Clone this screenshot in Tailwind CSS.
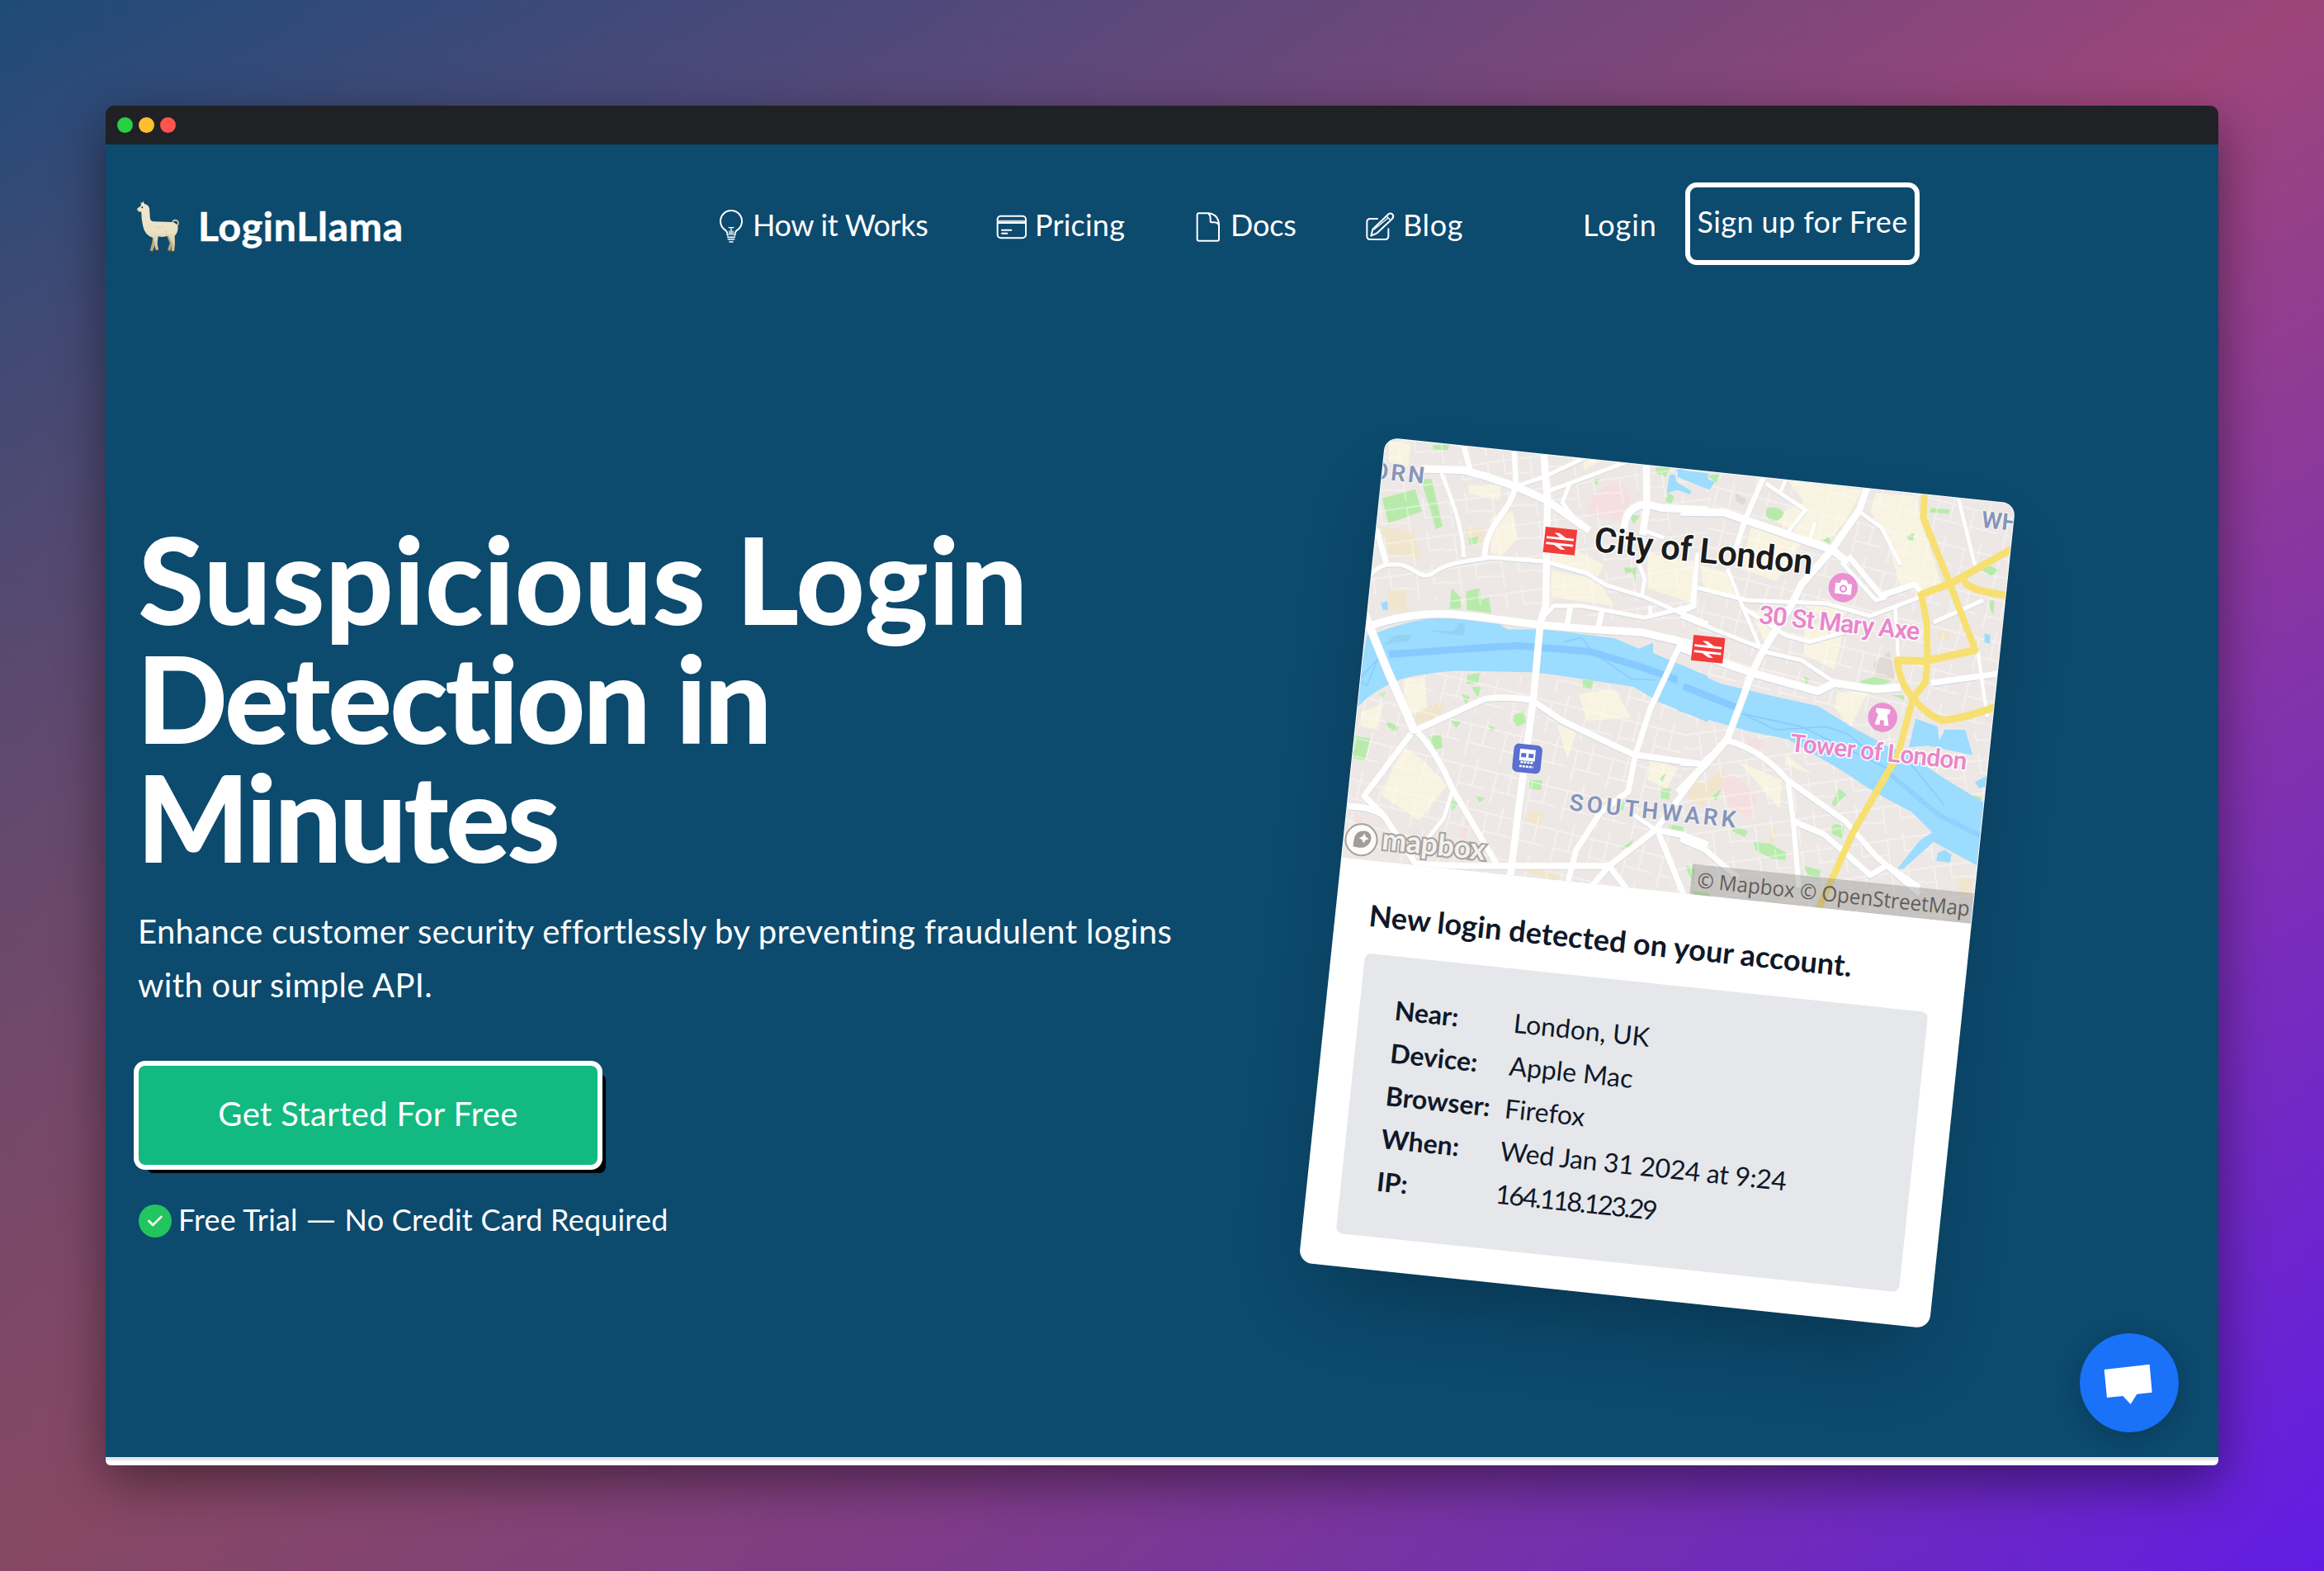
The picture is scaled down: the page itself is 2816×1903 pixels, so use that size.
<!DOCTYPE html>
<html lang="en">
<head>
<meta charset="utf-8">
<title>LoginLlama</title>
<script src="https://cdn.jsdelivr.net/npm/@tailwindcss/browser@4"></script>
</head>
<body class="h-[1903px] w-[2816px] overflow-hidden bg-[radial-gradient(ellipse_at_bottom_left,rgba(110,75,75,0.5),rgba(110,75,75,0)_75%),linear-gradient(to_bottom_right,#1c4b7a_0%,#9d457b_50%,#601be9_100%)] p-32 font-[Lato,sans-serif] text-white">
<div class="relative flex h-[1647px] w-[2560px] flex-col overflow-visible rounded-[10px] shadow-[0_20px_60px_rgba(0,0,0,0.45)]">

  <div class="flex h-[47px] shrink-0 items-center gap-[7px] rounded-t-[10px] bg-[#202124] pl-3.5">
    <span class="size-[19px] rounded-full bg-[#28d044]"></span>
    <span class="size-[19px] rounded-full bg-[#ffbf2f]"></span>
    <span class="size-[19px] rounded-full bg-[#ff544d]"></span>
  </div>

  <div class="h-[1590px] shrink-0 bg-[#0c4a6e]">
    <header class="flex h-[192px] items-center pl-[27px] text-4xl leading-[48px]">
      <a class="flex w-[709px] items-center gap-[5px]">
        <svg class="mt-2 size-20" viewBox="0 0 240 240">
          <defs><linearGradient id="wool" x1="0" y1="0" x2="0" y2="1"><stop offset="0" stop-color="#efe9d2"/><stop offset=".6" stop-color="#e9e1c2"/><stop offset="1" stop-color="#cfc294"/></linearGradient></defs>
          <path d="M164 110Q160 96 171 95Q184 96 183 108Q181 116 172 112" fill="none" stroke="#d8cda4" stroke-width="5"/>
          <path d="M92 148l-5 32-8 30 10 0 12-30 6-30zM140 148l12 30-9 31 11 0 8-32-6-30z" fill="#b9a976"/>
          <path d="M32 60Q31 52 46 45L48 36L45 29L53 34L54 25L61 37Q74 38 78 52L80 78Q79 98 92 100L160 102Q182 106 182 124Q181 142 170 152L171 180L168 211H159L160 180L148 150Q130 160 110 154L107 180L112 207H102L96 180L92 160Q62 152 55 118Q48 90 49 64Q38 66 32 60Z" fill="url(#wool)"/>
          <path d="M136 128q-2 22 14 28M100 118q20 10 30-2" fill="none" stroke="#d5caa0" stroke-width="3" opacity=".7"/>
          <circle cx="52" cy="49" r="3" fill="#2a2320"/><path d="M31 58l6-1 1 5-5 1z" fill="#54443a"/>
          <path d="M78 206h11l-1 6H75zM102 203h9l2 5h-12zM142 205h11l-1 5h-12zM159 207h10l-1 7h-11z" fill="#4a3d35"/>
        </svg>
        <span class="pt-1.5 text-5xl font-bold tracking-[0.8px] [-webkit-text-stroke:0.6px_#fff]">LoginLlama</span>
      </a>
      <a class="flex w-[340px] items-center gap-2">
        <svg class="h-[50px] w-10" viewBox="0 3 120 150" fill="none" stroke="#fff" stroke-width="6" stroke-linecap="round" stroke-linejoin="round">
          <path d="M53 120Q53 106 40 98A39 39 0 1 1 92 98Q79 106 79 120"/><path d="M57 92H75M66 92V118M60 105V118M72 105V118" stroke-width="4"/><path d="M53 127H79M55 135H77M60 144H72" stroke-width="5"/>
        </svg>
        <span class="pt-0.5 tracking-[-0.35px]">How it Works</span>
      </a>
      <a class="flex w-[241px] items-center gap-2">
        <svg class="h-[50px] w-[42px]" viewBox="1020 3 126 150" fill="none" stroke="#fff" stroke-width="6" stroke-linecap="round">
          <rect x="1034" y="50" width="103" height="80" rx="12"/><path d="M1035 67H1136" stroke-width="3"/><path d="M1035 74H1136" stroke-width="8" stroke-linecap="butt"/><path d="M1050 101H1084M1050 113H1069"/>
        </svg>
        <span class="pt-0.5 tracking-[0.2px]">Pricing</span>
      </a>
      <a class="flex w-[208px] items-center gap-1.5">
        <svg class="h-[50px] w-10" viewBox="15 3 120 150" fill="none" stroke="#fff" stroke-width="6" stroke-linejoin="round">
          <path d="M38 40H72Q110 44 111 84V134Q111 140 105 140H38Q32 140 32 134V46Q32 40 38 40Z"/><path d="M72 40Q80 46 80 60V68Q80 73 85 73H94Q108 74 111 84"/>
        </svg>
        <span class="pt-0.5 tracking-[-0.2px]">Docs</span>
      </a>
      <a class="flex w-[265px] items-center gap-[7px]">
        <svg class="h-[50px] w-10" viewBox="640 3 120 150" fill="none" stroke="#fff" stroke-width="6" stroke-linecap="round" stroke-linejoin="round">
          <path d="M688 60H662Q650 60 650 72V123Q650 135 662 135H716Q728 135 728 123V97"/><path d="M665 122L671 98L727 44Q735 37 743 44Q749 52 742 60L687 112Z"/><path d="M721 50L736 65M676 99L727 57" stroke-width="4"/>
        </svg>
        <span class="pt-0.5 tracking-[0.7px]">Blog</span>
      </a>
      <a class="w-[124px] pt-0.5 tracking-[1px]">Login</a>
      <a class="flex h-[100px] w-[284px] items-center justify-center rounded-[14px] border-6 border-white pb-1.5 tracking-[0.4px] whitespace-nowrap">Sign up for Free</a>
    </header>

    <section class="flex">
      <div class="w-[1496px] shrink-0 pt-[262px] pl-10">
        <h1 class="text-[144px] leading-[144px] font-bold [-webkit-text-stroke:2px_#fff]">
          <span class="block tracking-[1.4px]">Suspicious Login</span>
          <span class="-ml-0.5 block tracking-[-2px]">Detection in</span>
          <span class="-ml-0.5 block tracking-[-2.5px]">Minutes</span>
        </h1>
        <p class="mt-[35px] -ml-px text-[40px] leading-[65px] tracking-[0.34px]">Enhance customer security effortlessly by preventing fraudulent logins<br>with our simple API.</p>
        <a class="mt-[65px] flex h-[120px] w-[556px] items-center justify-center rounded-lg bg-[#12b981] pb-1 text-[40px] tracking-[0.34px] shadow-[0_0_0_6px_#fff,10px_10px_0_0_#000]">Get Started For Free</a>
        <div class="mt-12 flex h-10 items-center gap-2">
          <svg class="size-10" viewBox="0 0 40 40"><circle cx="20" cy="20" r="20" fill="#22c55e"/><path d="M12.4 20L17.2 25L27.4 14.8" fill="none" stroke="#fff" stroke-width="2.6" stroke-linecap="round" stroke-linejoin="round"/></svg>
          <span class="pb-1 text-4xl leading-[48px] tracking-[0.2px]">Free Trial <span class="inline-block w-[38px] origin-left scale-x-[1.33]">—</span> No Credit Card Required</span>
        </div>
      </div>

      <article class="mt-[200px] h-[1005px] w-[768px] shrink-0 rotate-6 overflow-hidden rounded-2xl bg-white text-gray-900 shadow-[0_50px_100px_-24px_rgba(0,0,0,0.28)]">
        <svg class="block h-[512px] w-[768px]" viewBox="0 0 768 512">
          <defs>
            <clipPath id="frame"><rect x="1" y="1" width="766" height="511"/></clipPath>
            <pattern id="lanes" width="52" height="40" patternUnits="userSpaceOnUse" patternTransform="rotate(-14)"><path d="M0 8H52M14 8V40M0 26H14M34 0V24H52" fill="none" stroke="#fff" stroke-width="1.5" opacity=".5"/></pattern>
            <pattern id="lanes2" width="44" height="50" patternUnits="userSpaceOnUse" patternTransform="rotate(8)"><path d="M0 12H44M10 12V50M28 0V34M10 34H44" fill="none" stroke="#fff" stroke-width="1.5" opacity=".5"/></pattern>
            <g id="west" fill="none" stroke-linejoin="round">
              <path stroke-width="26" d="M250 135L400 140L480 160L590 195L700 240L860 345M692 75L706 240L703 430L700 600L680 660L655 920L600 1300L570 1530M40 675C200 620 320 622 430 635L680 665L870 680L1050 690L1290 742M1065 100L1068 260L1052 360M985 350Q985 262 1065 255L1120 268L1290 275"/>
              <path stroke-width="30" d="M30 600L60 670L130 830L225 1030"/>
              <path stroke-width="21" d="M590 195C570 290 480 320 478 435M585 60L592 195M400 50L425 140M85 340L120 455M220 1025L480 915Q560 905 650 920L760 990L1020 1105L1290 1140M210 1035L40 1245L110 1310L230 1480M235 1030Q300 1090 360 1220L530 1490M1190 730L1080 950L1025 1110L1000 1230L900 1300L810 1430L775 1560M230 1475L400 1482L930 1482L1100 1360L1200 1378L1290 1410M1100 1360L1290 1120M1110 1370L1210 1600M930 1482L860 1560M930 1482L1010 1580M790 600L778 665M905 620L890 675M-20 1280Q60 1280 110 1310"/>
              <path stroke-width="14" d="M320 150C360 240 400 340 402 435M50 510C90 460 120 455 180 462C240 480 240 510 290 490C340 450 420 450 500 435L700 450L850 490L920 530L1060 570L1180 620L1290 660M360 1230L330 1320L270 1390M590 195L700 160L860 90M700 215L1000 110M790 180L760 250L810 310M1040 460L1060 510L1050 565M1252 420L1230 600L1060 640L830 600L730 600L680 650M1080 600V640M1020 1310L1100 1360M1060 345L1130 370"/>
            </g>
            <g id="east" fill="none" stroke-linejoin="round">
              <path stroke-width="25" d="M-10 210L150 212L240 240L540 330L600 370M670 130L640 205L540 330L430 440L390 510L290 650L250 720L160 930L90 1000L-20 1100M-10 640L250 720L490 778L550 752L700 772L790 765"/>
              <path stroke-width="19" d="M295 95L225 235L190 330M160 935Q280 960 380 1060L590 1190L700 1300L860 1420M380 1060L400 1190L420 1400M400 1190L510 1230L680 1360L740 1330L860 1400M600 350L720 475L840 440L870 470M900 752L1150 722M-10 1245L80 1280L200 1370"/>
              <path stroke-width="13" d="M300 120L445 205L380 275M378 100L352 150M640 210L720 260L790 380M480 245L460 300M280 650L430 680L550 750M-10 540L280 640M50 450L230 490L520 500L680 540L860 480M160 390L220 520L280 640M210 510L370 600L460 622L590 590M50 370L40 510L-10 530M575 370L700 490L740 480M770 510L782 680M910 560L1090 490M998 160L1060 380M1070 650L1105 860M-10 1008L60 1010L150 940"/>
            </g>
          </defs>
          <g clip-path="url(#frame)">
            <rect width="768" height="512" fill="#ede8e5"/>
            <!-- built-up blocks, parks and hospitals -->
            <g transform="matrix(.3315 -.03483 .03732 .35518 -39.83 -5.87)">
              <path fill="#f9f3e1" d="M130 40l80 10-10 80-70-20zM500 300l80-20 20 90-60 60-40-10zM720 370l130 60 60 30-20 40-170-50zM720 480l170 30 60 90-230-30zM1070 420l180 30-20 140-160-50zM180 850l80-10 10 110-70 40zM820 900l130-20 60 100-160 10zM180 1080q60 20 160 130l-100 120-140-90zM30 960l80-30-20 90-60-10zM830 60l120 20-110 60zM740 1000l70 30-30 90zM1080 1120l100 30-40 70-70-30zM420 190l120 0-10 50-110-20z"/>
              <path fill="#f1e6cd" d="M100 330l120 20 30 90-120-10zM130 540l60 10 10 80-70-20zM410 340l70-10-10 60-60-10zM210 970l120-50-10 60-100 20zM640 1290l50 10-10 50-50-20zM600 1490l150 10-10 40zM1200 1230l60-60v110z"/>
              <path fill="#f5dfe0" d="M870 230L940 180L990 190L1010 240L970 310L850 290ZM0 1300l40 20-30 30zM400 1350l25-20-20 60-20-10z"/>
              <path fill="#b8ecac" d="M105 235L225 205L250 280L128 320ZM245 170l40 0 40 160-25 10-20-70zM290 55l60-3-5 20-55-2zM358 540l32 30 2 40-42 0zM410 550l50-10 5 40 28-10 10 55-90-12zM415 835l45-8-5 35-42 2zM430 875l38 0-12 38zM395 900l30 8-15 28zM585 970l35-14 8 40-30 14-15-20zM275 1045l45-10 5 45-25 8zM355 990l40 0-20 25zM0 1040l62 10-20 75-45-10zM640 1190l48 2-5 33-42-4zM835 850l38 4-5 27-35-5zM420 370l35-5-5 28-28 0zM985 470l45 0-5 55-10-40-25 5zM1100 130l55 0-20 32-35-12zM1145 215l22 15-10 25-22-10zM1005 290l38 5-25 27zM870 175l25-8-10 24zM350 1255l35 15-28 26zM445 1245l35 8-20 14zM970 1425l48-32-10 25zM1120 1220l36 0-8 38-30-5zM1112 1185l26-18-15 30zM1150 1340l52 10-2 14-50-8zM1210 1480l30 10v60zM120 990l45 20-8 18-32-18zM945 1270l45-5-10 30zM495 1005l22 8-15 16zM95 900l22-10-8 24z"/>
            </g>
            <g transform="matrix(.3315 -.03483 .03999 .38055 360.06 -27.78)">
              <path fill="#f9f3e1" d="M380 110l270 30-60 100-80 80-200-90 130-50zM700 150l150 10 10 70 80 210-80 30-70-20-60-180-50-60zM250 250l180 60-90 120-130-40zM60 380l100 20 50 90-130-20zM240 520l120 10-60 100zM440 550l140 50-30 110-110-50zM370 1010l0-30 100 60zM200 1000l160 60-10 90-110-110zM560 780l110 0-60 110-60-60zM420 500l180 20-40 50z"/>
              <path fill="#f1e6cd" d="M20 1110l130-90-10 60-70 60zM320 1210l20 0-10 50-20-10zM1000 1370l50 0-5 60-40-10zM930 590l40-5-5 30-40-5z"/>
              <path fill="#f5dfe0" d="M155 1035L225 1070L268 1120L250 1180L170 1150L140 1080ZM235 925l60 10-15 30-50-15z"/>
              <path fill="#b8ecac" d="M300 200q30-12 65 10-5 30-40 30-30-10-25-40zM90 95l40-5-10 30zM898 198l70 4-3 14-68-4zM812 285l28-8-5 24-20-2zM1070 390l50-8 30 14-30 16zM1112 490l18 0-2 48-12-20zM645 745l50-12 60 12-20 10-90 5zM505 300l25-10 5 22zM565 1085l28 20-30 25-15 15-8-12zM540 1205q20-15 45 5l-5 35-40-15zM255 1255l60 5 60 30-4 22-50-4-58-28zM180 1205l55 15-10 20-45-18zM105 1110l35-25-20 40zM435 1330l65 15-5 20-40-5zM10 1340l32-10-5 55zM1050 1105l35 10-2 12-25-5zM440 730l20 10-15 18zM520 575l20 5-10 18zM760 790l40 0 8 18zM30 1410l60 5 10 15-60-4z"/>
              <path fill="#e2dad4" d="M690 690l60-40 20 90-70-10zM190 150l40 20-10 20-30-15z"/>
            </g>
            <path fill="url(#lanes)" d="M0 0H400V190H0ZM400 280H768V512H400Z"/>
            <path fill="url(#lanes2)" d="M400 0H768V270H400ZM0 270H400V512H0Z"/>
            <!-- the Thames and docks -->
            <g transform="matrix(.3315 -.03483 .03732 .35518 -39.83 -5.87)">
              <path fill="#9bdcff" d="M50 700L90 690Q220 642 340 640L525 658L560 680L700 680L950 710L1040 745L1090 725L1090 760L1290 838L1290 995L1110 925L1020 875L850 850L700 830L640 825L370 820Q240 830 170 850Q60 890 0 960ZM1150 155l20 0 5 25 55 30-5 12-45-15-40 10zM1165 138L1290 150V195L1220 165ZM100 590l25-6 2 30-18 0z"/>
              <path fill="none" stroke="#86caff" stroke-width="24" d="M130 765Q400 745 600 735L860 755L1040 805L1232 868"/>
              <path fill="none" stroke="#86caff" stroke-width="4" d="M20 850L90 780L50 870L30 860M770 722l60-15 40 50 140 90 90 5"/>
              <path fill="#8fcbe9" d="M110 735l40-35 60-2-10 22-50 5zM275 685l90 0 20-25 20 0 0 40-20 0z" opacity=".6"/>
            </g>
            <g transform="matrix(.3315 -.03483 .03999 .38055 360.06 -27.78)">
              <path fill="#9bdcff" d="M-20 695L140 755L350 798L490 825L620 895L740 950L830 985L960 1060L1110 1140L1090 1340L910 1255L800 1340L778 1340L860 1250L905 1225L830 1160L700 1100L560 1020L380 930L240 905L-20 840ZM845 865L925 890L930 935L950 900L1025 900L1052 980L890 950L820 955ZM1060 1065l45-20-5 35-25 5zM1095 595l22 5-2 28-20-5zM-20 70L115 115L95 140L-20 100ZM925 1290l25-10 25 15-5 25-50-5z"/>
              <path fill="none" stroke="#86caff" stroke-width="22" d="M0 762L190 828"/>
              <path fill="none" stroke="#86caff" stroke-width="4" d="M170 830L335 900L520 890L600 915L660 960M820 1000L950 1140M220 850L430 890L760 1030"/>
              <path fill="none" stroke="#86caff" stroke-width="16" stroke-dasharray="5 4" d="M750 1040L930 1170L1080 1235"/>
            </g>
            <!-- streets: casing below, carriageway above -->
            <g transform="matrix(.3315 -.03483 .03732 .35518 -39.83 -5.87)"><use href="#west" stroke="#cdd5e3" transform="translate(0 3)" opacity=".8"/></g>
            <g transform="matrix(.3315 -.03483 .03999 .38055 360.06 -27.78)"><use href="#east" stroke="#cdd5e3" transform="translate(0 3)" opacity=".8"/></g>
            <g transform="matrix(.3315 -.03483 .03732 .35518 -39.83 -5.87)"><use href="#west" stroke="#fff"/></g>
            <g transform="matrix(.3315 -.03483 .03999 .38055 360.06 -27.78)">
              <use href="#east" stroke="#fff"/>
              <path fill="none" stroke="#f7e071" stroke-width="24" stroke-linejoin="round" d="M877 140L873 230L970 440L1062 648L885 682L778 680Q785 750 835 800L780 980L620 1220L485 1480M1200 325L970 438L865 472L885 560L888 682L880 750L835 800Q880 850 940 870Q1020 865 1140 825M1020 425Q1030 460 1180 475"/>
            </g>
            <g font-family="Roboto, sans-serif" font-weight="500" paint-order="stroke" stroke-linejoin="round">
              <g fill="#8594ba" stroke="#f4f1f0" stroke-width="3" font-weight="600">
                <text x="-11" y="51" font-size="28" textLength="63">ORN</text>
                <text x="729" y="33" font-size="28">WH</text>
                <text x="268" y="426" font-size="28" textLength="203">SOUTHWARK</text>
              </g>
              <text x="265" y="111" font-size="42" font-weight="600" textLength="266" fill="#1c1c1c" stroke="#fff" stroke-width="3">City of London</text>
              <g fill="#e987cb" stroke="#fff" stroke-width="3" font-weight="600">
                <text x="473" y="177" font-size="31" textLength="196">30 St Mary Axe</text>
                <text x="527" y="327" font-size="30" textLength="215">Tower of London</text>
              </g>
            </g>
            <g id="rail"><rect x="204.500" y="87.500" width="38.500" height="31" fill="#f23c3c"/><path d="M207 100H240M207 107H240" stroke="#fff" stroke-width="2.800" fill="none"/><path d="M216 93.500h6l11 6.500h-8zM231 113h-6l-11-6.500h8z" fill="#fff"/></g>
            <use href="#rail" x="192" y="111.500"/>
            <g><rect x="194.500" y="352" width="34.500" height="34.500" rx="6" fill="#5a6fd0"/><path d="M202 358h19v14h-19z" fill="#fff"/><path d="M204 363h6v5h-6zM213 363h6v5h-6z" fill="#5a6fd0"/><path d="M204 374h15M203 379h17" stroke="#fff" stroke-width="2.500" stroke-dasharray="3 1"/></g>
            <g fill="#e991d2"><circle cx="570.700" cy="123.200" r="17.700"/><circle cx="634.800" cy="274.600" r="17.700"/></g>
            <path fill="#fff" d="M561 118h5l2-4h6l2 4h5v13h-20zM626 264h17v5l-3 2 3 13h-6v-6h-5v6h-6l3-13-3-2z"/>
            <circle cx="571" cy="124.500" r="3.600" fill="none" stroke="#e991d2" stroke-width="2"/>
            <circle cx="22" cy="488" r="19" fill="#fff" fill-opacity=".85" stroke="#a5a09c" stroke-width="2"/>
            <path d="M13 497c-1-14 3-20 12-20s11 10 6 16-12 5-18 4zM25 480l2 4 4 2-4 2-2 4-2-4-4-2 4-2z" fill="#a39d98" fill-rule="evenodd"/>
            <text x="47" y="497" font-family="Lato, sans-serif" font-weight="700" font-size="36" textLength="126" lengthAdjust="spacingAndGlyphs" fill="#f4f1ee" stroke="#a5a09c" stroke-width="4" paint-order="stroke">mapbox</text>
            <rect x="424.500" y="475" width="344" height="37" fill="#8c8c8a" fill-opacity=".4"/>
            <text x="432" y="503" font-family="Open Sans, sans-serif" font-size="25.500" textLength="332" lengthAdjust="spacingAndGlyphs" fill="#5f5e5d">© Mapbox © OpenStreetMap</text>
          </g>
        </svg>
        <div class="px-[41px] pt-[41px]">
          <h2 class="text-4xl leading-[48px] font-bold tracking-[0.08px]">New login detected on your account.</h2>
          <dl class="mt-[23px] grid h-[341px] grid-cols-[145px_1fr] content-start rounded-lg bg-[#e5e7eb] pt-[39px] pl-[43px] text-[32px] leading-[52px]">
            <dt class="font-bold">Near:</dt><dd>London, UK</dd>
            <dt class="font-bold">Device:</dt><dd>Apple Mac</dd>
            <dt class="font-bold">Browser:</dt><dd>Firefox</dd>
            <dt class="font-bold">When:</dt><dd class="tracking-[-0.28px]">Wed Jan 31 2024 at 9:24</dd>
            <dt class="font-bold">IP:</dt><dd class="tracking-[-2.3px]">164.118.123.29</dd>
          </dl>
        </div>
      </article>
    </section>
  </div>
  <div class="h-1 shrink-0 bg-[#e5e7eb]"></div>
  <div class="h-1.5 shrink-0 rounded-b-[10px] bg-white"></div>

  <svg class="absolute right-12 bottom-10 size-[120px] rounded-full shadow-[0_6px_30px_rgba(0,0,0,0.2)]" viewBox="240 105 360 360"><circle cx="420" cy="285" r="180" fill="#1972f8"/><path fill="#fff" d="M329 237L494 218L503 320L448 326L425 363L397 333L339 339Z"/></svg>
</div>
</body>
</html>
